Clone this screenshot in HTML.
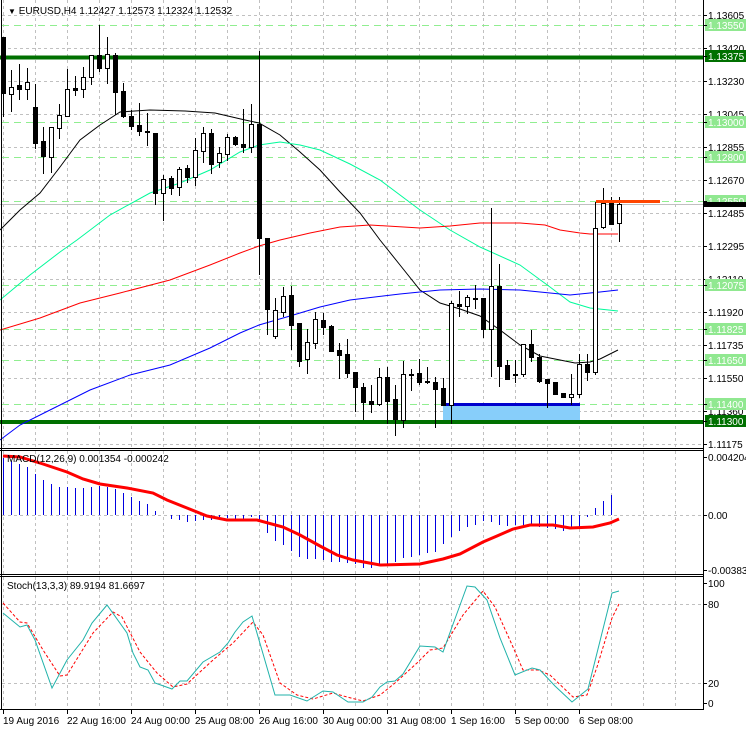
<!DOCTYPE html>
<html><head><meta charset="utf-8"><style>
html,body{margin:0;padding:0;background:#fff;}
svg{display:block;font-family:"Liberation Sans",Tahoma,sans-serif;font-size:10px;}
</style></head><body>
<svg id="s" width="746" height="731" xmlns="http://www.w3.org/2000/svg" shape-rendering="crispEdges">
<rect width="746" height="731" fill="#fff"/>
<g id="grid"></g>
<g id="lv"></g>
<rect x="443" y="404" width="137" height="18" fill="#87CEFA"/>
<line x1="443" y1="404.5" x2="580" y2="404.5" stroke="#0000CD" stroke-width="3"/>
<line x1="0" y1="57.5" x2="703" y2="57.5" stroke="#007000" stroke-width="4"/>
<line x1="0" y1="422" x2="703" y2="422" stroke="#007000" stroke-width="4"/>
<line x1="0" y1="204.5" x2="703" y2="204.5" stroke="#c0c0c0"/>
<g shape-rendering="auto" fill="none" stroke-width="1">
<polyline stroke="#000" points="0,230 20,210 40,193 60,167 80,140 100,125 120,112 150,110 185,111 215,113 245,120 259,123 280,135 300,152 320,170 340,192 360,213 380,240 400,265 420,290 440,303 460,309 480,316 500,330 520,345 540,356 560,360 575,363 590,362 600,359 618,350"/>
<polyline stroke="#00FA9A" points="0,300 30,275 60,252 77,240 110,215 150,193 180,183 210,170 240,152 259,145 280,142 300,145 320,150 350,164 380,180 420,210 450,230 480,247 520,265 550,287 570,302 590,308 618,311"/>
<polyline stroke="#FF0000" points="0,330 40,318 80,303 120,293 170,280 210,265 240,253 259,246 280,240 310,233 340,227 370,225 420,228 450,226 480,223 520,223 545,225 560,230 580,233 590,234 618,234"/>
<polyline stroke="#0000FF" points="0,440 20,425 50,410 90,390 130,375 170,365 210,348 240,333 259,325 290,316 320,307 350,300 400,294 440,290 480,289 520,290 540,292 570,295 600,292 618,290"/>
</g>
<g id="c"></g>
<line x1="596" y1="201.5" x2="660" y2="201.5" stroke="#FF4500" stroke-width="3"/>
<g id="macd"></g>
<g shape-rendering="auto" fill="none">
<polyline stroke="#FF0000" stroke-width="3" points="3,456 20,457 43,464 67,472 83,479 100,484 127,488 153,493 167,500 187,508 207,516 227,520 257,520 283,527 300,535 320,546 337,555 353,560 380,565 420,564 443,559 460,554 483,542 497,536 513,529 530,525 553,525 570,528 593,527 610,523 619,519"/>
<polyline stroke="#FF0000" stroke-width="1" stroke-dasharray="3,2" points="3,603 20,622 27,623 43,650 60,676 67,675 93,633 113,612 122,617 140,652 157,673 173,687 187,684 213,660 233,643 253,622 263,635 280,683 297,695 313,699 333,693 347,697 363,701 380,695 395,683 417,663 430,650 443,648 463,615 483,591 495,607 513,647 523,670 538,670 550,675 573,697 587,695 597,667 612,618 619,604"/>
<polyline stroke="#20B2AA" stroke-width="1" points="3,613 20,627 27,625 35,640 52,688 67,660 83,640 92,623 107,605 127,633 133,653 140,667 148,670 155,683 172,689 180,681 187,681 203,662 220,652 228,643 235,632 243,622 252,616 275,695 290,695 307,701 323,691 333,692 348,702 363,702 372,697 380,687 387,682 395,681 403,674 420,646 435,647 443,652 452,627 467,586 475,587 487,600 500,638 515,675 532,668 540,670 555,686 572,702 588,689 612,593 619,591"/>
</g>
<g stroke="#000" fill="none">
<line x1="1.5" y1="0" x2="1.5" y2="710"/>
<line x1="703.5" y1="0" x2="703.5" y2="710"/>
<line x1="0" y1="448.5" x2="704" y2="448.5"/>
<line x1="0" y1="450.5" x2="704" y2="450.5"/>
<line x1="0" y1="574.5" x2="704" y2="574.5"/>
<line x1="0" y1="576.5" x2="704" y2="576.5"/>
<line x1="0" y1="709.5" x2="704" y2="709.5"/>
</g>
<g id="ax"></g>
<text x="8" y="14" fill="#000"><tspan font-size="8">▼</tspan> EURUSD,H4  1.12427 1.12573 1.12324 1.12532</text>
<text x="7" y="462" fill="#000">MACD(12,26,9) 0.001354 -0.000242</text>
<text x="7" y="589" fill="#000">Stoch(13,3,3) 89.9194 81.6697</text>
</svg>
<script>
var NS="http://www.w3.org/2000/svg";
function el(p,t,a,txt){var e=document.createElementNS(NS,t);for(var k in a)e.setAttribute(k,a[k]);if(txt!=null)e.textContent=txt;document.getElementById(p).appendChild(e);return e;}
for(var x=3;x<700;x+=32){
 [[0,448],[451,574],[577,709]].forEach(function(r){el("grid","line",{x1:x+.5,y1:r[0],x2:x+.5,y2:r[1],stroke:"#c0c0c0","stroke-dasharray":"3,3"});});
}
var Y=function(p){return Math.round(15+(1.13605-p)*17650)+.5;};
var gp=[1.13605,1.13420,1.13230,1.13045,1.12855,1.12670,1.12485,1.12295,1.12110,1.11920,1.11735,1.11550,1.11360,1.11175];
gp.forEach(function(p){el("grid","line",{x1:2,y1:Y(p),x2:703,y2:Y(p),stroke:"#c0c0c0","stroke-dasharray":"3,3"});});
[604,683].forEach(function(y){el("grid","line",{x1:2,y1:y+.5,x2:703,y2:y+.5,stroke:"#c0c0c0","stroke-dasharray":"3,3"});});
el("grid","line",{x1:2,y1:515.5,x2:703,y2:515.5,stroke:"#c0c0c0","stroke-dasharray":"3,3"});
var lp=[1.13550,1.13000,1.12800,1.12550,1.12075,1.11825,1.11650,1.11400];
lp.forEach(function(p){el("lv","line",{x1:2,y1:Y(p),x2:703,y2:Y(p),stroke:"#90EE90","stroke-dasharray":"7,5"});});
var C=[[3,37,93,37,117,0],[11,87,94,70,112,1],[19,85,89,64,100,0],[27,82,89,68,100,1],[35,107,143,84,149,0],[43,141,156,127,174,0],[51,127,157,127,173,1],[59,115,128,104,139,1],[67,89,116,69,116,1],[75,88,90,76,96,0],[83,77,89,67,98,1],[91,55,77,55,85,1],[99,55,68,25,72,0],[107,54,68,37,84,1],[115,55,92,53,115,0],[123,91,116,83,118,0],[131,116,126,110,130,0],[139,125,131,103,136,0],[147,131,132,113,146,0],[155,133,193,133,205,0],[163,179,193,175,221,1],[171,178,188,176,195,0],[179,169,187,167,196,1],[187,168,177,165,183,0],[195,150,177,138,186,1],[203,133,151,127,163,1],[211,133,164,129,174,0],[219,153,162,147,168,1],[227,137,154,134,161,1],[235,137,144,136,146,0],[243,144,147,109,153,0],[251,124,147,104,153,1],[259,124,238,51,275,0],[267,238,309,238,335,0],[275,310,336,298,339,1],[283,296,312,287,317,1],[291,295,325,286,350,0],[299,323,361,323,367,0],[307,342,359,329,374,1],[315,319,343,312,349,1],[323,320,327,313,335,0],[331,326,351,325,352,0],[339,350,355,343,379,0],[347,354,373,339,378,0],[355,372,387,372,412,0],[363,387,402,383,420,0],[371,401,404,385,413,0],[379,377,404,368,406,1],[387,377,401,367,424,0],[395,399,419,385,436,0],[403,374,420,361,428,1],[411,374,375,369,391,0],[419,373,382,359,385,0],[427,381,382,367,384,0],[435,382,389,377,428,0],[443,388,405,378,405,0],[451,303,405,301,424,1],[459,304,306,291,317,0],[467,297,306,295,314,1],[475,298,299,285,309,0],[483,298,329,298,338,0],[491,286,329,208,377,1],[499,286,366,264,387,0],[507,365,379,360,380,0],[515,374,375,360,383,0],[523,344,374,344,377,1],[531,344,357,330,362,0],[539,357,381,354,383,0],[547,379,383,379,408,0],[555,382,394,382,395,0],[563,393,397,393,398,0],[571,394,397,374,405,1],[579,364,394,354,398,1],[587,364,372,354,381,0],[595,228,372,202,375,1],[603,203,227,188,229,1],[611,203,224,197,225,0],[619,204,223,197,242,1]];
C.forEach(function(c){
 var x=c[0];
 el("c","line",{x1:x+.5,y1:c[3],x2:x+.5,y2:c[4],stroke:"#000"});
 var h=Math.max(1,c[2]-c[1]);
 if(c[5]) el("c","rect",{x:x-1.5,y:c[1]+.5,width:4,height:h,fill:"#fff",stroke:"#000"});
 else el("c","rect",{x:x-2,y:c[1],width:5,height:h+1,fill:"#000"});
});
var H=[458,461,464,467,474,480,484,487,487,488,488,487,486,487,489,493,497,501,504,511,515,519,520,522,521,520,520,519,518,519,519,517,521,533,541,545,551,557,559,559,560,562,562,563,564,568,568,
564,564,562,558,557,555,553,552,544,537,531,527,525,521,522,525,526,525,525,524,527,528,529,531,527,527,517,508,501,495];
for(var i=0;i<H.length;i++){var x=3+i*8, y=H[i]; if(y==515)continue;
 el("macd","line",{x1:x+.5,y1:Math.min(515,y),x2:x+.5,y2:Math.max(515,y),stroke:"#0000E0"});}
function lab(y,t,bg,fg){
 if(bg) el("ax","rect",{x:705,y:y-6,width:41,height:12,fill:bg});
 el("ax","line",{x1:703,y1:y+.5,x2:707,y2:y+.5,stroke:"#000"});
 el("ax","text",{x:708,y:y+4,fill:fg||"#000"},t);
}
gp.forEach(function(p){lab(Math.round(15+(1.13605-p)*17650),p.toFixed(5));});
lp.forEach(function(p){lab(Math.round(15+(1.13605-p)*17650),p.toFixed(5),"#90E890","#fff");});
lab(56,"1.13375","#007000","#fff");lab(421,"1.11300","#007000","#fff");
el("ax","rect",{x:704,y:202,width:42,height:5,fill:"#000"});
lab(457,"0.004204");lab(515,"0.00");lab(570,"-0.003836");
lab(583,"100");lab(604,"80");lab(683,"20");lab(703,"0");
var T=["19 Aug 2016","22 Aug 16:00","24 Aug 00:00","25 Aug 08:00","26 Aug 16:00","30 Aug 00:00","31 Aug 08:00","1 Sep 16:00","5 Sep 00:00","6 Sep 08:00"];
T.forEach(function(t,i){var x=3+i*64;el("ax","line",{x1:x+.5,y1:710,x2:x+.5,y2:714,stroke:"#000"});el("ax","text",{x:x,y:724,fill:"#000"},t);});
</script>
</body></html>
